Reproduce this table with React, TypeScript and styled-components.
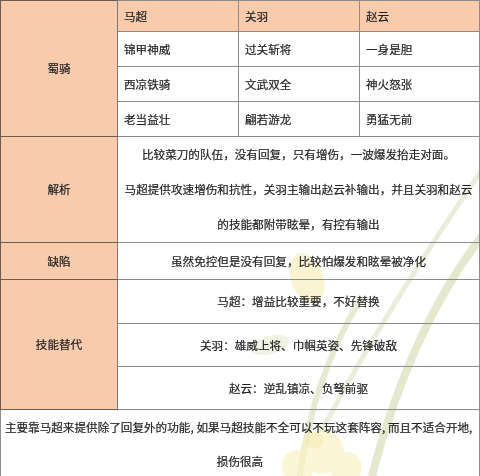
import React from 'react';
import styled, { createGlobalStyle } from 'styled-components';

const GlobalStyle = createGlobalStyle`
  html, body {
    margin: 0;
    padding: 0;
    background: #ffffff;
  }
  body {
    font-family: "Noto Sans CJK SC", "Noto Sans", sans-serif;
    color: #222222;
  }
`;

const PEACH = '#f8cbad';
const LINE = '#8c8c8c';

const Page = styled.div`
  position: relative;
  width: 480px;
  height: 476px;
  overflow: hidden;
  background: #ffffff;
`;

const Watermark = styled.svg`
  position: absolute;
  left: 0;
  top: 0;
  width: 480px;
  height: 476px;
  pointer-events: none;
`;

const Table = styled.table`
  position: relative;
  width: 479px;
  height: 476px;
  border-collapse: collapse;
  table-layout: fixed;
  border: 1px solid #222222;
  font-size: 11.6px;
  line-height: 17px;
  -webkit-text-stroke: 0.2px currentColor;
`;

const Cell = styled.td<{ $peach?: boolean; $align?: 'left' | 'center'; $h?: number }>`
  border: 1px solid ${LINE};
  background: ${({ $peach }) => ($peach ? PEACH : 'transparent')};
  text-align: ${({ $align }) => $align ?? 'center'};
  height: ${({ $h }) => ($h ? `${$h}px` : 'auto')};
  padding: 0 ${({ $align }) => ($align === 'left' ? '6px' : '1px')};
  vertical-align: middle;
  white-space: nowrap;
  box-sizing: border-box;
`;

const LabelCell = styled(Cell)`
  border-color: #6e5a50;
  border-right-color: #7a7a7a;
`;

const Lines = styled.div`
  line-height: 35px;
`;

const LooseLines = styled.div`
  line-height: 34px;
`;

const Line = styled.div``;

const NarrowComma = styled.span`
  display: inline-block;
  width: 6px;
  text-align: left;
`;

const squadSkills = [
  ['锦甲神威', '过关斩将', '一身是胆'],
  ['西凉铁骑', '文武双全', '神火怒张'],
  ['老当益壮', '翩若游龙', '勇猛无前'],
];

const replacements = [
  { text: '马超：增益比较重要，不好替换', h: 44 },
  { text: '关羽：雄威上将、巾帼英姿、先锋破敌', h: 43 },
  { text: '赵云：逆乱镇凉、负弩前驱', h: 43 },
];

const summary = ['主要靠马超来提供除了回复外的功能', '如果马超技能不全可以不玩这套阵容', '而且不适合开地'];

export default function App() {
  return (
    <>
      <GlobalStyle />
      <Page>
        <Watermark viewBox="0 0 480 476">
          <g fill="none" strokeLinecap="round" opacity="0.8">
            <path d="M372 476 Q410 330 482 236" stroke="#dfe3c4" strokeWidth="8" />
            <path d="M322 430 Q392 300 482 170" stroke="#e6e9d2" strokeWidth="5" />
            <path d="M300 476 Q312 380 360 300" stroke="#e2e6c8" strokeWidth="6" />
          </g>
          <g opacity="0.65">
            <ellipse cx="307" cy="278" rx="16" ry="26" fill="#f7edb8" transform="rotate(-20 307 278)" />
            <ellipse cx="270" cy="345" rx="20" ry="9" fill="#e9edd6" transform="rotate(-15 270 345)" />
            <circle cx="322" cy="452" r="22" fill="#fbf1c0" />
            <circle cx="298" cy="466" r="16" fill="#fbf1c0" />
            <circle cx="346" cy="468" r="16" fill="#fbf1c0" />
            <circle cx="315" cy="440" r="9" fill="#f6e7a4" />
          </g>
        </Watermark>
        <Table>
          <colgroup>
            <col style={{ width: 117 }} />
            <col style={{ width: 121 }} />
            <col style={{ width: 121 }} />
            <col style={{ width: 120 }} />
          </colgroup>
          <tbody>
            <tr>
              <LabelCell $peach rowSpan={4}>蜀骑</LabelCell>
              <Cell $peach $align="left" $h={31}>马超</Cell>
              <Cell $peach $align="left">关羽</Cell>
              <Cell $peach $align="left">赵云</Cell>
            </tr>
            {squadSkills.map((row) => (
              <tr key={row[0]}>
                {row.map((skill) => (
                  <Cell key={skill} $align="left" $h={35}>
                    {skill}
                  </Cell>
                ))}
              </tr>
            ))}
            <tr>
              <LabelCell $peach>解析</LabelCell>
              <Cell colSpan={3} $h={105}>
                <Lines>
                  <Line>比较菜刀的队伍，没有回复，只有增伤，一波爆发抬走对面。</Line>
                  <Line>马超提供攻速增伤和抗性，关羽主输出赵云补输出，并且关羽和赵云</Line>
                  <Line>的技能都附带眩晕，有控有输出</Line>
                </Lines>
              </Cell>
            </tr>
            <tr>
              <LabelCell $peach>缺陷</LabelCell>
              <Cell colSpan={3} $h={37}>
                虽然免控但是没有回复，比较怕爆发和眩晕被净化
              </Cell>
            </tr>
            {replacements.map((r, i) => (
              <tr key={r.text}>
                {i === 0 && (
                  <LabelCell $peach rowSpan={3}>
                    技能替代
                  </LabelCell>
                )}
                <Cell colSpan={3} $h={r.h}>
                  {r.text}
                </Cell>
              </tr>
            ))}
            <tr>
              <Cell colSpan={4} $h={68}>
                <LooseLines>
                  <Line>
                    {summary.map((part) => (
                      <React.Fragment key={part}>
                        {part}
                        <NarrowComma>,</NarrowComma>
                      </React.Fragment>
                    ))}
                  </Line>
                  <Line>损伤很高</Line>
                </LooseLines>
              </Cell>
            </tr>
          </tbody>
        </Table>
      </Page>
    </>
  );
}
